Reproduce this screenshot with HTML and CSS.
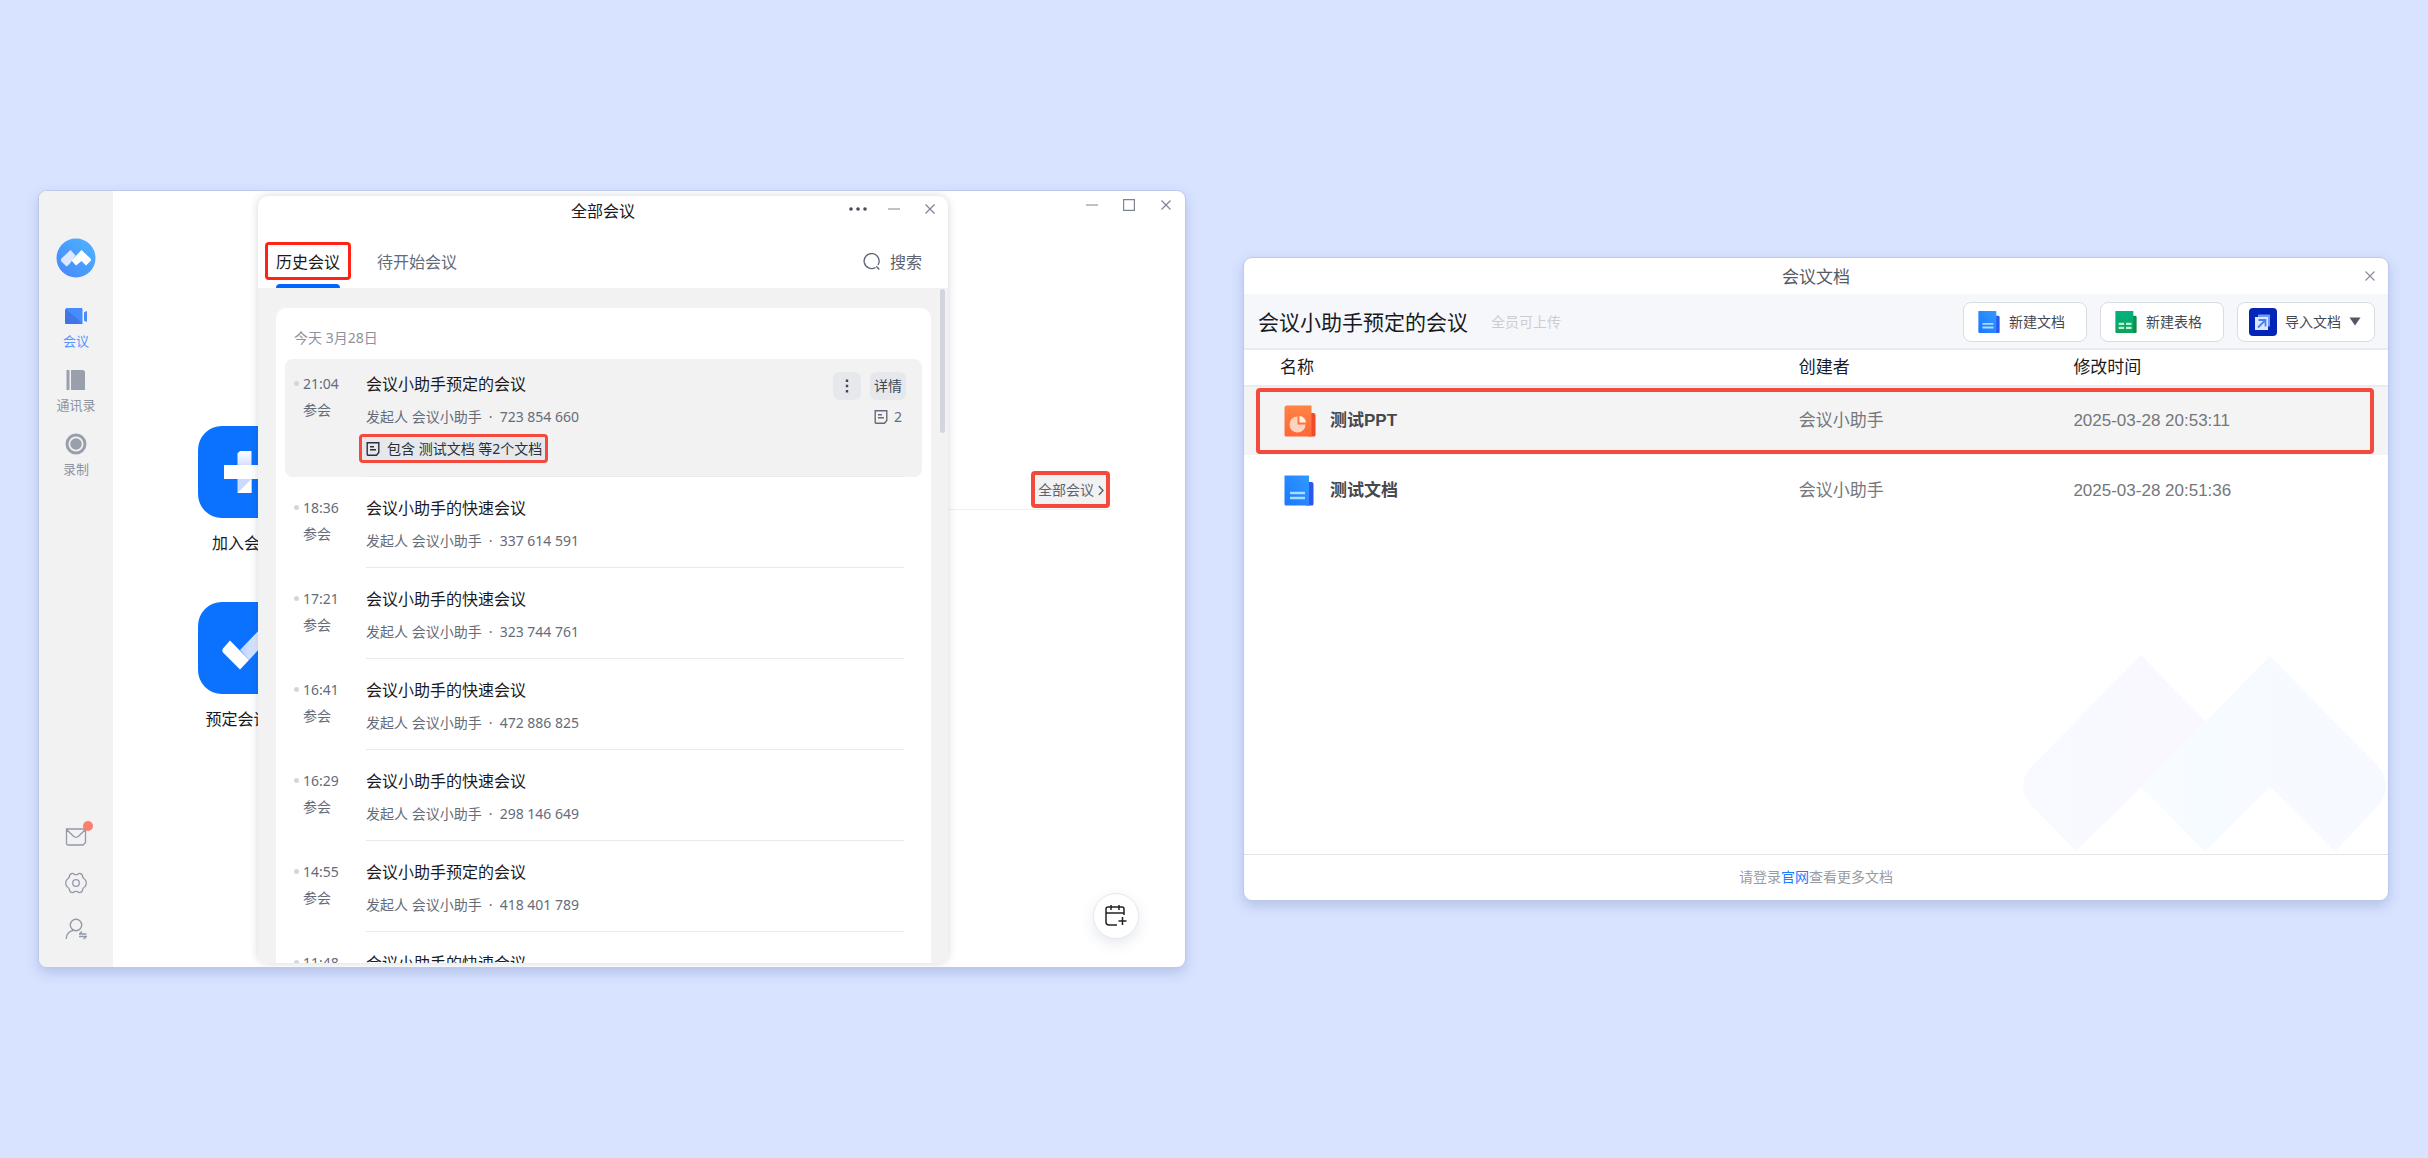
FILE: index.html
```html
<!DOCTYPE html>
<html lang="zh-CN">
<head>
<meta charset="utf-8">
<meta name="viewport" content="width=device-width, initial-scale=1">
<title>会议文档</title>
<link rel="stylesheet" href="styles.css">
</head>
<body>
<svg class="defs" aria-hidden="true">
  <defs>
    <linearGradient id="g-logo" x1="0" y1="1" x2="1" y2="0"><stop offset="0" stop-color="#4785fb"/><stop offset="1" stop-color="#4cb6ff"/></linearGradient>
    <linearGradient id="g-cam" x1="0" y1="1" x2="1" y2="0"><stop offset="0" stop-color="#3b74e0"/><stop offset=".5" stop-color="#4179ea"/><stop offset=".52" stop-color="#468cff"/></linearGradient>
    <linearGradient id="g-fade" x1="0" y1="0" x2="0" y2="1"><stop offset="0" stop-color="#fff"/><stop offset="1" stop-color="#d5e1ff"/></linearGradient>
    <linearGradient id="g-check" x1="0" y1="0" x2="1" y2="0"><stop offset="0" stop-color="#bcd2ff"/><stop offset="1" stop-color="#fff"/></linearGradient>
    <linearGradient id="g-doc" x1="0" y1="1" x2="1" y2="0"><stop offset="0" stop-color="#1878ff"/><stop offset="1" stop-color="#3399ff"/></linearGradient>
    <linearGradient id="g-ppt" x1="0" y1="0" x2="0" y2="1"><stop offset="0" stop-color="#ff8345"/><stop offset="1" stop-color="#ff6838"/></linearGradient>
    <linearGradient id="g-sheet" x1="0" y1="0" x2="0" y2="1"><stop offset="0" stop-color="#00b382"/><stop offset="1" stop-color="#0da355"/></linearGradient>
    <linearGradient id="g-wm" x1="0" y1="0" x2="1" y2="0"><stop offset="0" stop-color="#f7fcff"/><stop offset="1" stop-color="#f6f9ff"/></linearGradient>
    <linearGradient id="g-wm2" x1="0" y1="0" x2="1" y2="0"><stop offset="0" stop-color="#f8faff"/><stop offset="1" stop-color="#f8f8fe"/></linearGradient>
  </defs>
  <symbol id="i-note" viewBox="0 0 14 14"><path d="M1.200 .8h11.600v9.700l-2.300 2.700H2.200a1 1 0 0 1-1-1V.8zM4 4.800h4M4 7.800h6" fill="none" stroke="currentColor" stroke-width="1.400"/></symbol>
  <symbol id="i-close" viewBox="0 0 12 12"><path d="M1.500 1.500l9 9M10.500 1.500l-9 9" fill="none" stroke="currentColor" stroke-width="1.200"/></symbol>
  <symbol id="i-min" viewBox="0 0 12 12"><path d="M0 6h12" stroke="currentColor" stroke-width="1.200"/></symbol>
  <symbol id="i-doc" viewBox="0 0 30 31"><path d="M22 7h5.500a2 2 0 0 1 2 2v20a1.500 1.500 0 0 1-1.500 1.500h-6z" fill="#2b57f0"/><path d="M1 .5h24V30.500H2A1.500 1.500 0 0 1 .500 29V1z" fill="url(#g-doc)"/><path d="M6 18h15M6 23h15" stroke="#a8dcff" stroke-width="2.600"/></symbol>
</svg>
<main class="stage">
  <section class="window client" aria-label="会议客户端">
    <nav class="sidebar">
      <svg class="logo" viewBox="0 0 40 40"><circle cx="20" cy="20" r="19.500" fill="url(#g-logo)"/><path d="M14.500 12l5 5.500-6 8.500-3 2.500-5-5q-1.200-1.500 0-3z" fill="#dce8ff"/><path d="M25.500 12l9 8.500q1 1.500 0 2.500l-4.500 4.500-4.500-4.500-5.500 4.500-4.500-5z" fill="#fff"/></svg>
      <ul class="nav">
        <li><a class="nav-item active" href="#"><svg viewBox="0 0 22 22"><path d="M1.500 3H16.500a1 1 0 0 1 1 1v15H1a1 1 0 0 1-1-1V4.500z" fill="url(#g-cam)"/><path d="M19 7.500l2-1.200h1v10.400h-1l-2-1.200z" fill="#468cff"/></svg>会议</a></li>
        <li><a class="nav-item" href="#"><svg viewBox="0 0 22 22"><path d="M1.500 1h3v20h-3zM6 1h11.500a2.500 2.500 0 0 1 2.500 2.500V21H6z" fill="#9aa0ab"/></svg>通讯录</a></li>
        <li><a class="nav-item" href="#"><svg viewBox="0 0 22 22"><circle cx="11" cy="11" r="9" fill="none" stroke="#9aa0ab" stroke-width="3"/><circle cx="11" cy="11" r="5.800" fill="#9aa0ab"/></svg>录制</a></li>
      </ul>
      <div class="tools">
        <button class="tool" aria-label="消息"><svg viewBox="0 0 22 22"><path d="M1.500 3h19v13.500l-2.500 2.500H3a1.500 1.500 0 0 1-1.500-1.500zM1.500 3.500L8.500 10.300Q11 12.300 13.500 10.300L20.500 3.500" fill="none" stroke="#9298a5" stroke-width="1.300"/></svg><span class="badge"></span></button>
        <button class="tool" aria-label="设置"><svg viewBox="0 0 22 22"><path d="M7 1.300Q8.500 1.200 9.300 2.300Q11 3 12.700 2.300Q13.500 1.200 15 1.300Q17.500 2 17.600 4.500Q18 6.300 19.500 7Q21.300 8.300 21.300 11Q21.300 13.700 19.500 15Q18 15.700 17.600 17.500Q17.500 20 15 20.700Q13.500 20.800 12.700 19.700Q11 19 9.300 19.700Q8.500 20.800 7 20.700Q4.500 20 4.400 17.500Q4 15.700 2.500 15Q.7 13.700 .7 11Q.7 8.300 2.500 7Q4 6.300 4.400 4.500Q4.500 2 7 1.300Z" fill="none" stroke="#9298a5" stroke-width="1.300" stroke-linejoin="round"/><circle cx="11" cy="11" r="3.300" fill="none" stroke="#9298a5" stroke-width="1.300"/></svg></button>
        <button class="tool" aria-label="账号"><svg viewBox="0 0 22 22" fill="none" stroke="#9298a5" stroke-width="1.400"><circle cx="11" cy="7" r="5.700"/><path d="M1.200 21q.3-7.500 7.300-8.600M14 16h7.500M17 13.500L14.300 16M14 18.500h7.500L18.500 21"/></svg></button>
      </div>
    </nav>
    <div class="home">
      <div class="controls">
        <button aria-label="最小化"><svg><use href="#i-min"/></svg></button>
        <button aria-label="最大化"><svg viewBox="0 0 12 12"><path d="M.6.6h10.800v10.800H.6z" fill="none" stroke="currentColor" stroke-width="1.200"/></svg></button>
        <button aria-label="关闭"><svg><use href="#i-close"/></svg></button>
      </div>
      <div class="home-body">
        <div class="tiles">
          <button class="tile"><svg viewBox="0 0 92 92"><rect width="92" height="92" rx="24" fill="#0b72ff"/><path d="M42 25h11.500v14H39.500V27.500z" fill="url(#g-fade)"/><path d="M39.500 53h14v14h-14z" fill="#c9d9ff"/><path d="M53.500 53v14h-14z" fill="#fff"/><path d="M26 39h41v14H26z" fill="#fff"/></svg><span>加入会议</span></button>
          <button class="tile"><svg viewBox="0 0 92 92"><rect width="92" height="92" rx="24" fill="#0b72ff"/><path d="M42 48l25-26 9 9-25 27z" fill="url(#g-check)"/><path d="M32 38.500L51 58l-9 9.500-17-17q-1.500-1.500 0-4z" fill="#fff"/></svg><span>预定会议⌄</span></button>
        </div>
        <div class="upcoming"><button class="all-meetings">全部会议<svg viewBox="0 0 6 11"><path d="M.8 1l4.200 4.500L.8 10" fill="none" stroke="currentColor" stroke-width="1.400"/></svg></button></div>
      </div>
    </div>

    <section class="panel" aria-label="全部会议">
      <header class="panel-title">
        <h2>全部会议</h2>
        <div class="controls">
          <button class="more" aria-label="更多"><svg viewBox="0 0 18 12"><circle cx="2" cy="6" r="1.800"/><circle cx="9" cy="6" r="1.800"/><circle cx="16" cy="6" r="1.800"/></svg></button>
          <button aria-label="最小化"><svg><use href="#i-min"/></svg></button>
          <button aria-label="关闭"><svg><use href="#i-close"/></svg></button>
        </div>
      </header>
      <div class="tabs">
        <button class="tab selected">历史会议</button>
        <button class="tab">待开始会议</button>
        <button class="search"><svg viewBox="0 0 18 18"><path d="M12.500 14.500A7.500 7.500 0 1 1 15 12M13.300 13.300l3 3.200" fill="none" stroke="currentColor" stroke-width="1.300"/></svg>搜索</button>
      </div>
      <div class="history">
        <div class="card">
          <h3>今天 3月28日</h3>
          <ul class="meetings">
            <li class="meeting hovered">
              <div class="when"><time>21:04</time><span>参会</span></div>
              <div class="info">
                <div class="text"><h4>会议小助手预定的会议</h4><p>发起人 会议小助手<i>·</i>723 854 660</p>
                  <a class="docs" href="#"><svg><use href="#i-note"/></svg>包含 测试文档 等2个文档</a></div>
                <div class="actions">
                  <button aria-label="更多操作" class="kebab"><svg viewBox="0 0 4 14"><path d="M.8.500h2.400v2.400H.8zM.8 5.800h2.400v2.400H.8zM.8 11.100h2.400v2.400H.8z"/></svg></button>
                  <button class="detail">详情</button>
                  <span class="count"><svg><use href="#i-note"/></svg>2</span>
                </div>
              </div>
            </li>
            <li class="meeting"><div class="when"><time>18:36</time><span>参会</span></div><div class="info"><div class="text"><h4>会议小助手的快速会议</h4><p>发起人 会议小助手<i>·</i>337 614 591</p></div></div></li>
            <li class="meeting"><div class="when"><time>17:21</time><span>参会</span></div><div class="info"><div class="text"><h4>会议小助手的快速会议</h4><p>发起人 会议小助手<i>·</i>323 744 761</p></div></div></li>
            <li class="meeting"><div class="when"><time>16:41</time><span>参会</span></div><div class="info"><div class="text"><h4>会议小助手的快速会议</h4><p>发起人 会议小助手<i>·</i>472 886 825</p></div></div></li>
            <li class="meeting"><div class="when"><time>16:29</time><span>参会</span></div><div class="info"><div class="text"><h4>会议小助手的快速会议</h4><p>发起人 会议小助手<i>·</i>298 146 649</p></div></div></li>
            <li class="meeting"><div class="when"><time>14:55</time><span>参会</span></div><div class="info"><div class="text"><h4>会议小助手预定的会议</h4><p>发起人 会议小助手<i>·</i>418 401 789</p></div></div></li>
            <li class="meeting"><div class="when"><time>11:48</time></div><div class="info"><div class="text"><h4>会议小助手的快速会议</h4></div></div></li>
          </ul>
        </div>
        <span class="scroll-thumb"></span>
      </div>
    </section>
    <button class="fab" aria-label="添加日程"><svg viewBox="0 0 22 22" fill="none" stroke="#222" stroke-width="1.500"><path d="M19 10V4a2 2 0 0 0-2-2H3a2 2 0 0 0-2 2v13a3 3 0 0 0 3 3h8M1 8h18M6 0v5M14 0v5M17.500 12v8M13.500 16h8"/></svg></button>
  </section>

  <section class="window library" aria-label="会议文档">
    <header class="lib-title">
      <h2>会议文档</h2>
      <div class="controls"><button aria-label="关闭"><svg><use href="#i-close"/></svg></button></div>
    </header>
    <div class="toolbar">
      <h1>会议小助手预定的会议</h1>
      <span class="hint">全员可上传</span>
      <button class="make"><svg class="file"><use href="#i-doc"/></svg>新建文档</button>
      <button class="make"><svg class="file" viewBox="0 0 30 31"><path d="M22 7h5.500a2 2 0 0 1 2 2v20a1.500 1.500 0 0 1-1.500 1.500h-6z" fill="#0b8f4d"/><path d="M1 .5h24V30.500H2A1.500 1.500 0 0 1 .500 29V1z" fill="url(#g-sheet)"/><path d="M5 18h7.500M15 18h7.500M5 23.500h7.500M15 23.500h7.500" stroke="#b9f5d8" stroke-width="3"/></svg>新建表格</button>
      <button class="make import"><svg class="import-icon" viewBox="0 0 28 28"><rect width="28" height="28" rx="4" fill="#0426b8"/><path d="M9 6.500h12v12h-3v3.500H6V9h3z" fill="#6f9bf5"/><path d="M6 9h13v13H6z" fill="#dce8ff"/><path d="M9 19.500l7-7M9.500 12h7v6.500" fill="none" stroke="#4a80f0" stroke-width="1.800"/></svg>导入文档<svg class="caret" viewBox="0 0 12 9"><path d="M.5.500h11L6 8.500z" fill="#515765"/></svg></button>
    </div>
    <div class="files">
      <svg class="watermark" viewBox="0 0 364 197" aria-hidden="true"><path d="M118 0l64 67-64 65-65 64L8 150q-16-18 0-38z" fill="url(#g-wm2)"/><path d="M247 1l106 108q20 22 0 44l-41 44-65-65-65 65-64-65z" fill="url(#g-wm)"/></svg>
      <table>
        <thead><tr><th scope="col">名称</th><th scope="col">创建者</th><th scope="col">修改时间</th></tr></thead>
        <tbody>
          <tr class="marked"><td><a class="file-name" href="#"><svg viewBox="0 0 32 32"><path d="M24 8h5.500a2 2 0 0 1 2 2v20a1.500 1.500 0 0 1-1.500 1.500h-6z" fill="#f04a26"/><path d="M2 .5h25.500v31H2A1.500 1.500 0 0 1 .500 30V2z" fill="url(#g-ppt)"/><path d="M13.500 11.500v8h8a8 8 0 1 1-8-8z" fill="#ffd3bd"/><path d="M15.500 11a7 7 0 0 1 6.500 6.500h-6.500z" fill="#fff0e8"/></svg>测试PPT</a></td><td>会议小助手</td><td>2025-03-28 20:53:11</td></tr>
          <tr><td><a class="file-name" href="#"><svg><use href="#i-doc"/></svg>测试文档</a></td><td>会议小助手</td><td>2025-03-28 20:51:36</td></tr>
        </tbody>
      </table>
    </div>
    <footer>请登录<a href="#">官网</a>查看更多文档</footer>
  </section>
</main>
</body>
</html>
```
FILE: styles.css
```css
* { box-sizing: border-box; }

body {
  margin: 0;
  background: #d8e3ff;
  color: #181a1f;
  font: 14px/20px "Noto Sans", "Noto Sans CJK SC", sans-serif;
}

h1, h2, h3, h4, p, ul { margin: 0; padding: 0; font-weight: 400; }
ul { list-style: none; }
a { color: inherit; text-decoration: none; }
button { margin: 0; padding: 0; border: 0; background: none; color: inherit; font: inherit; }
svg { display: block; flex: none; }
.defs { position: absolute; width: 0; height: 0; }

.stage {
  display: grid;
  grid-template-columns: 573fr 572fr;
  gap: 59px;
  align-items: center;
  min-height: 100vh;
  padding: 0 40px 0 39px;
}

.window {
  position: relative;
  display: flex;
  overflow: hidden;
  border-radius: 8px;
  background: #fff;
  box-shadow: 0 0 0 1px #bcc9ea, 0 5px 14px rgba(70, 95, 160, .28);
}

.controls { display: flex; justify-content: flex-end; color: #7d8492; }
.controls button { display: grid; place-items: center; width: 36px; height: 26px; }
.controls svg { width: 12px; height: 12px; }
.controls .more svg { width: 18px; fill: #454b58; }

/* Meeting client */
.client { height: 67vh; }

.sidebar {
  display: flex;
  flex-direction: column;
  align-items: center;
  width: 74px;
  padding: 47px 0 27px;
  background: #f2f2f3;
}
.logo { width: 40px; height: 40px; }
.nav { display: flex; flex-direction: column; gap: 20px; margin-top: 27px; }
.nav-item {
  display: flex;
  flex-direction: column;
  align-items: center;
  gap: 6px;
  color: #8e94a0;
  font-size: 13px;
  line-height: 16px;
}
.nav-item svg, .tool svg { width: 22px; height: 22px; }
.nav-item.active { color: #5795ff; }
.tools { display: flex; flex-direction: column; gap: 24px; margin-top: auto; }
.tool { position: relative; }
.badge {
  position: absolute;
  top: -5px;
  right: -6px;
  width: 10px;
  height: 10px;
  border-radius: 50%;
  background: #fa7f6c;
}

.home { flex: 1; }
.home .controls { padding-right: 1px; }
.home .controls button { width: 37px; height: 27px; }
.home-body { display: flex; justify-content: space-between; padding: 0 75px 0 85px; }
.tiles { display: flex; flex-direction: column; gap: 47px; padding-top: 208px; }
.tile {
  display: flex;
  flex-direction: column;
  align-items: center;
  gap: 13px;
  font-size: 16px;
  line-height: 24px;
}
.tile svg { width: 92px; height: 92px; }
.upcoming {
  display: flex;
  flex: 1;
  justify-content: flex-end;
  align-self: flex-start;
  padding: 253px 0 1px;
  border-bottom: 1px solid #eff0f2;
}
.all-meetings {
  display: flex;
  align-items: center;
  gap: 4px;
  padding: 5px 2px 4px 3px;
  border: 4px solid #f5493d;
  border-radius: 4px;
  background: #f2f2f3;
  color: #5c6370;
}
.all-meetings svg { width: 6px; height: 11px; }

.fab {
  position: absolute;
  right: 46px;
  bottom: 28px;
  display: grid;
  place-items: center;
  width: 46px;
  height: 46px;
  border: 1px solid #e6e8ee;
  border-radius: 50%;
  background: #fff;
  box-shadow: 0 5px 14px rgba(50, 70, 120, .12);
}
.fab svg { width: 22px; height: 22px; }

/* Floating meeting list */
.panel {
  position: absolute;
  top: 5px;
  bottom: 4px;
  left: 219px;
  display: flex;
  flex-direction: column;
  width: 690px;
  overflow: hidden;
  border-radius: 10px;
  background: #fff;
  box-shadow: 0 0 8px rgba(40, 50, 80, .2);
}
.panel-title, .lib-title { display: grid; grid-template-columns: 1fr auto 1fr; }
.panel-title h2, .lib-title h2 { grid-column: 2; }
.panel-title h2 { font-size: 16px; line-height: 30px; }
.tabs {
  display: flex;
  gap: 37px;
  padding: 0 26px 0 18px;
  font-size: 16px;
  line-height: 24px;
}
.tab { position: relative; padding: 24px 0 14px; color: #646b78; }
.tab.selected { color: #181a1f; }
.tab.selected::before {
  content: "";
  position: absolute;
  inset: 16px -11px 8px;
  border: 3px solid #ff2316;
  border-radius: 4px;
}
.tab.selected::after {
  content: "";
  position: absolute;
  inset: auto 0 0;
  height: 4px;
  border-radius: 4px 4px 0 0;
  background: #0066ff;
}
.search { display: flex; align-items: center; gap: 9px; margin-left: auto; padding: 24px 0 14px; color: #5c6370; }
.search svg { width: 18px; height: 18px; }

.history {
  position: relative;
  flex: 1;
  min-height: 0;
  overflow: hidden;
  padding: 20px 17px 0 18px;
  background: #f2f2f3;
}
.scroll-thumb {
  position: absolute;
  top: 1px;
  right: 3px;
  width: 5px;
  height: 144px;
  border-radius: 3px;
  background: #d2d5dd;
}
.card { padding: 0 9px; border-radius: 10px; background: #fff; }
.card h3 { padding: 20px 9px 11px; color: #8c929e; font-size: 14px; line-height: 20px; }

.meeting { display: grid; grid-template-columns: 72px 1fr; padding: 0 18px 0 9px; color: #656c79; }
.when { display: grid; align-content: start; gap: 6px; padding: 21px 0 0 9px; }
.when time { position: relative; }
.when time::before {
  content: "";
  position: absolute;
  top: 7px;
  left: -9px;
  width: 5px;
  height: 5px;
  border-radius: 50%;
  background: #d3d6dc;
}
.info {
  display: flex;
  justify-content: space-between;
  padding: 19px 0 16px;
  border-bottom: 1px solid #e8eaf0;
}
.text h4 { margin-bottom: 11px; color: #181a1f; font-size: 16px; line-height: 24px; }
.text i { display: inline-block; width: 18px; text-align: center; font-style: normal; }

.hovered { border-radius: 8px; background: #f2f2f3; }
.hovered .when { padding-top: 15px; }
.hovered .info { padding: 13px 0; }
.docs {
  display: flex;
  align-items: center;
  gap: 7px;
  width: max-content;
  margin: 7px 0 0 -7px;
  padding: 2px 3px 1px 4px;
  border: 3px solid #f5493d;
  border-radius: 4px;
  background: #e6e8ec;
  color: #2b2f38;
}
.docs svg, .count svg { width: 14px; height: 14px; }
.actions { display: grid; grid-template-columns: 28px 36px; gap: 7px 9px; align-content: start; margin-right: -2px; }
.actions button { display: grid; place-items: center; height: 28px; border-radius: 6px; background: #e6e8ec; color: #414754; }
.kebab svg { width: 4px; height: 14px; fill: #414754; }
.count { display: flex; grid-column: 2; align-items: center; justify-content: center; gap: 6px; }

/* Document library */
.library { flex-direction: column; height: 55.5vh; }
.lib-title { height: 36px; }
.lib-title h2 { padding-top: 1px; color: #565a62; font-size: 17px; line-height: 36px; }
.lib-title .controls { align-items: center; color: #8a909c; }
.toolbar {
  display: flex;
  align-items: center;
  gap: 13px;
  padding: 8px 13px 6px 14px;
  border-bottom: 2px solid #e9ebf2;
  background: #f5f7fb;
}
.toolbar h1 { font-size: 21px; line-height: 32px; }
.hint { margin: 0 auto 0 10px; color: #cbcdd1; }
.make {
  display: flex;
  align-items: center;
  gap: 9px;
  height: 40px;
  padding: 0 21px 0 14px;
  border: 1px solid #d9dce3;
  border-radius: 8px;
  background: #fff;
  color: #45484f;
}
.file { width: 22px; height: 24px; }
.make.import { gap: 8px; padding: 0 13px 0 11px; }
.import-icon { width: 28px; height: 28px; }
.caret { width: 12px; height: 9px; }

.files { position: relative; flex: 1; }
.watermark { position: absolute; right: 1px; bottom: 2px; width: 364px; height: 197px; }
table {
  position: relative;
  width: 100%;
  table-layout: fixed;
  border-collapse: separate;
  border-spacing: 0;
  font: 17px/24px "Liberation Sans", "Noto Sans CJK SC", sans-serif;
}
th { height: 37px; padding: 1px 0 0; border-bottom: 2px solid #e9ebf2; font-weight: 400; text-align: left; }
th:first-child { width: 48.5%; padding-left: 36px; }
th:nth-child(2) { width: 24%; }
td { height: 72px; padding: 0; color: #75777b; }
.marked td { height: 68px; background: #f4f4f4; }
td:first-child { padding-left: 40px; }
.marked { position: relative; }
.marked td:first-child::after {
  content: "";
  position: absolute;
  inset: 1px 14px 1px 12px;
  border: 4px solid #f5493d;
  border-radius: 4px;
  pointer-events: none;
}
.file-name { display: grid; grid-template-columns: 32px auto; gap: 14px; align-items: center; color: #45484c; font-weight: 700; }
.file-name svg { width: 30px; height: 31px; }
.marked .file-name svg { width: 32px; height: 32px; }

footer {
  padding: 12px 0 13px;
  border-top: 1px solid #e3e4e6;
  color: #999ca1;
  text-align: center;
}
footer a { color: #1a7dff; }
```
